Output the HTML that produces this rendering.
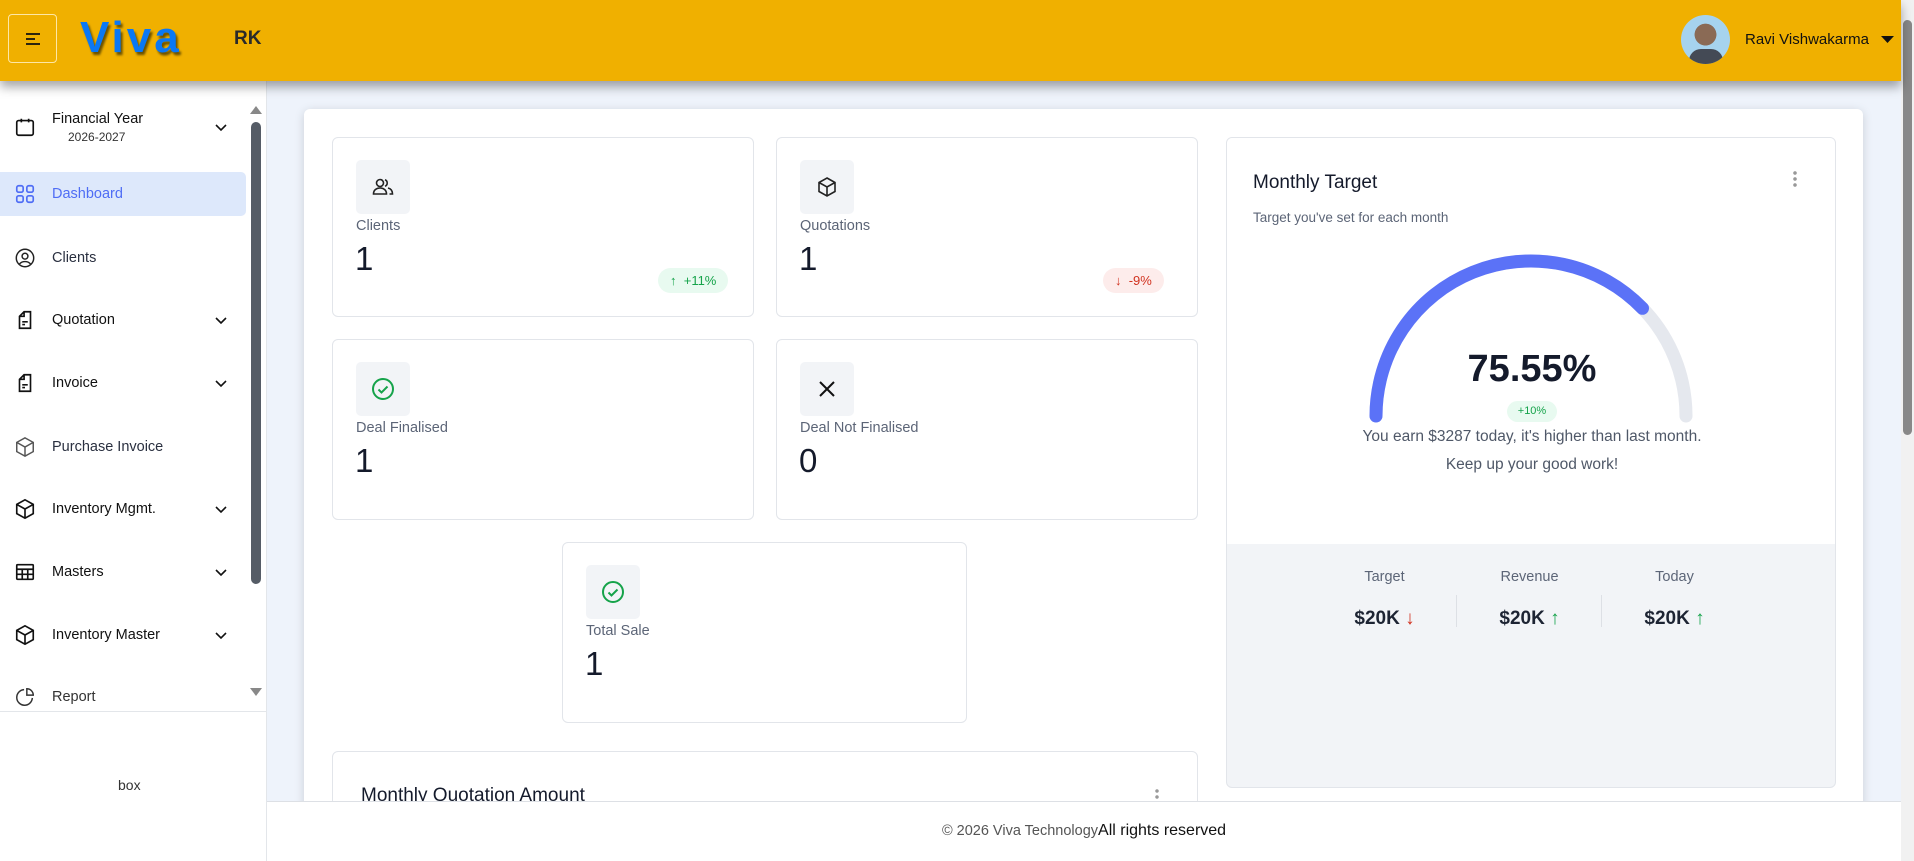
<!DOCTYPE html>
<html><head><meta charset="utf-8"><style>
*{box-sizing:border-box;margin:0;padding:0}
html,body{width:1914px;height:861px;overflow:hidden}
body{background:#eef3fb;font-family:"Liberation Sans",sans-serif;color:#1d2433;position:relative}
.a{position:absolute}
.hdr{left:0;top:0;width:1901px;height:81px;background:#f0b000;box-shadow:0 6px 10px rgba(0,0,0,.35);z-index:5}
.side{left:0;top:81px;width:267px;height:780px;background:#fff;border-right:1px solid #e3e6ea;z-index:3}
.it{position:absolute;left:0;width:246px;height:44px;display:flex;align-items:center;font-size:14.5px;color:#111}
.it svg{position:absolute;left:14px;width:22px;height:22px}
.it span{position:absolute;left:52px}
.it .chev{position:absolute;left:214px;width:14px;height:14px}
.card{position:absolute;background:#fff;border:1px solid #e2e5ea;border-radius:6px}
.ib{position:absolute;left:23px;top:22px;width:54px;height:54px;background:#f2f4f7;border-radius:5px}
.ib svg{position:absolute;left:15px;top:15px;width:24px;height:24px}
.lb{position:absolute;left:23px;top:80px;font-size:14.5px;color:#5c6577}
.num{position:absolute;left:22px;top:102px;font-size:33px;color:#141a2b}
.bdg{position:absolute;height:25px;border-radius:13px;font-size:13px;line-height:25px;padding:0 12px}
</style></head><body>
<div class="a hdr">
 <div class="a" style="left:8px;top:14px;width:49px;height:49px;border:1px solid #fde7a6;border-radius:4px">
  <svg class="a" style="left:14px;top:15px" width="20" height="18" viewBox="0 0 20 18" stroke="#111" stroke-width="1.8"><path d="M3 4h14M3 9h9M3 14h14"/></svg></div>
 <div class="a" style="left:80px;top:16px;font-size:44px;font-weight:bold;color:#0a78f5;letter-spacing:3px;text-shadow:2px 3px 2px #6b5200;line-height:44px">Viva</div>
 <div class="a" style="left:234px;top:28px;font-size:19px;font-weight:bold;color:#2a2a2a">RK</div>
 <div class="a" style="left:1681px;top:15px;width:49px;height:49px;border-radius:50%;background:radial-gradient(circle at 50% 40%,#8a6a55 0 28%,#a6d3ee 29%);overflow:hidden"><div class="a" style="left:8px;top:34px;width:34px;height:20px;background:#444a55;border-radius:12px 12px 0 0"></div></div>
 <div class="a" style="left:1745px;top:31px;font-size:15px;color:#111">Ravi Vishwakarma</div>
 <svg class="a" style="left:1881px;top:36px" width="13" height="8"><path d="M0 0h13L6.5 7z" fill="#111"/></svg>
</div>
<div class="a" style="left:1901px;top:0;width:13px;height:861px;background:#f1f1f1"><div class="a" style="left:2px;top:20px;width:9px;height:415px;background:#888;border-radius:5px"></div></div>
<div class="a side">
 <div class="it" style="top:21px;height:50px"><svg viewBox="0 0 24 24" fill="none" stroke="#111" stroke-width="1.8"><rect x="3" y="5" width="18" height="16" rx="2"/><path d="M8 3v4M16 3v4"/></svg>
  <span style="top:9px;font-size:14.5px">Financial Year</span><span style="top:28px;left:68px;font-size:12px;color:#333">2026-2027</span>
  <svg class="chev" viewBox="0 0 14 14" fill="none" stroke="#111" stroke-width="1.6"><path d="M2 5l5 5 5-5"/></svg></div>
 <div class="it" style="top:91px;background:#dde8fb;border-radius:0 5px 5px 0;color:#4f6df5"><svg viewBox="0 0 24 24" fill="none" stroke="#4f6df5" stroke-width="1.8"><rect x="3" y="3" width="7" height="7" rx="2"/><rect x="14" y="3" width="7" height="7" rx="2"/><rect x="3" y="14" width="7" height="7" rx="2"/><rect x="14" y="14" width="7" height="7" rx="2"/></svg><span>Dashboard</span></div>
 <div class="it" style="top:155px;color:#2a3040"><svg viewBox="0 0 24 24" fill="none" stroke="#222" stroke-width="1.6"><circle cx="12" cy="12" r="9.5"/><circle cx="12" cy="10" r="3.2"/><path d="M6 18.5c3-3.5 9-3.5 12 0"/></svg><span>Clients</span></div>
 <div class="it" style="top:217px"><svg viewBox="0 0 24 24" fill="none" stroke="#111" stroke-width="1.8"><path d="M11 3h7v18H6V8z M11 3v5H6M9 14h6M9 17h3"/></svg><span>Quotation</span><svg class="chev" viewBox="0 0 14 14" fill="none" stroke="#111" stroke-width="1.6"><path d="M2 5l5 5 5-5"/></svg></div>
 <div class="it" style="top:280px"><svg viewBox="0 0 24 24" fill="none" stroke="#111" stroke-width="1.8"><path d="M11 3h7v18H6V8z M11 3v5H6M9 14h6M9 17h3"/></svg><span>Invoice</span><svg class="chev" viewBox="0 0 14 14" fill="none" stroke="#111" stroke-width="1.6"><path d="M2 5l5 5 5-5"/></svg></div>
 <div class="it" style="top:344px;color:#2a3040"><svg viewBox="0 0 24 24" fill="none" stroke="#555" stroke-width="1.6"><path d="M12 2l9 5v10l-9 5-9-5V7z M3 7l9 5 9-5M12 12v10"/></svg><span>Purchase Invoice</span></div>
 <div class="it" style="top:406px"><svg viewBox="0 0 24 24" fill="none" stroke="#111" stroke-width="1.8"><path d="M12 2l9 5v10l-9 5-9-5V7z M3 7l9 5 9-5M12 12v10"/></svg><span>Inventory Mgmt.</span><svg class="chev" viewBox="0 0 14 14" fill="none" stroke="#111" stroke-width="1.6"><path d="M2 5l5 5 5-5"/></svg></div>
 <div class="it" style="top:469px"><svg viewBox="0 0 24 24" fill="none" stroke="#111" stroke-width="1.8"><rect x="3" y="4" width="18" height="16" rx="1"/><path d="M3 9h18M3 14.5h18M9 9v11M15 9v11"/></svg><span>Masters</span><svg class="chev" viewBox="0 0 14 14" fill="none" stroke="#111" stroke-width="1.6"><path d="M2 5l5 5 5-5"/></svg></div>
 <div class="it" style="top:532px"><svg viewBox="0 0 24 24" fill="none" stroke="#111" stroke-width="1.8"><path d="M12 2l9 5v10l-9 5-9-5V7z M3 7l9 5 9-5M12 12v10"/></svg><span>Inventory Master</span><svg class="chev" viewBox="0 0 14 14" fill="none" stroke="#111" stroke-width="1.6"><path d="M2 5l5 5 5-5"/></svg></div>
 <div class="a" style="left:0;top:594px;width:246px;height:36px;overflow:hidden"><div class="it" style="top:0"><svg viewBox="0 0 24 24" fill="none" stroke="#333" stroke-width="1.6"><path d="M11 4a8.5 8.5 0 1 0 9 9"/><path d="M14 3v7h7a7 7 0 0 0-7-7z"/></svg><span style="color:#333">Report</span></div></div>
 <div class="a" style="left:0;top:630px;width:266px;border-top:1px solid #e3e6ea"></div>
 <div class="a" style="left:118px;top:696px;font-size:14px;color:#333">box</div>
 <svg class="a" style="left:250px;top:25px" width="12" height="8"><path d="M0 8h12L6 0z" fill="#888"/></svg>
 <div class="a" style="left:251px;top:41px;width:10px;height:462px;background:#555c66;border-radius:5px"></div>
 <svg class="a" style="left:250px;top:607px" width="12" height="8"><path d="M0 0h12L6 8z" fill="#888"/></svg>
</div>
<div class="a" style="left:304px;top:109px;width:1559px;height:720px;background:#fff;border-radius:6px;box-shadow:0 2px 10px rgba(0,0,0,.15)"></div>
<div class="card" style="left:332px;top:137px;width:422px;height:180px"><div class="ib"><svg viewBox="0 0 24 24" fill="none" stroke="#222" stroke-width="1.6"><circle cx="9" cy="8" r="3.5"/><path d="M2.5 19c0-4 3-6 6.5-6s6.5 2 6.5 6z"/><path d="M14 4.8a3.5 3.5 0 0 1 0 6.5M17 13c2.5.6 4.5 2.5 4.5 6h-3"/></svg></div><div class="lb">Clients</div><div class="num">1</div><div class="bdg" style="left:325px;top:130px;background:#e8faf0;color:#15a34a">↑&nbsp; +11%</div></div>
<div class="card" style="left:776px;top:137px;width:422px;height:180px"><div class="ib"><svg viewBox="0 0 24 24" fill="none" stroke="#222" stroke-width="1.6"><path d="M12 3l8 4.5v9L12 21l-8-4.5v-9z M4 7.5l8 4.5 8-4.5M12 12v9"/></svg></div><div class="lb">Quotations</div><div class="num">1</div><div class="bdg" style="left:326px;top:130px;background:#fdeceb;color:#d1321f">↓&nbsp; -9%</div></div>
<div class="card" style="left:332px;top:339px;width:422px;height:181px"><div class="ib"><svg viewBox="0 0 24 24" fill="none" stroke="#16a34a" stroke-width="2"><circle cx="12" cy="12" r="10"/><path d="M7.5 12.5l3 3 6-6"/></svg></div><div class="lb">Deal Finalised</div><div class="num">1</div></div>
<div class="card" style="left:776px;top:339px;width:422px;height:181px"><div class="ib"><svg viewBox="0 0 24 24" fill="none" stroke="#111" stroke-width="2"><path d="M5 5l14 14M19 5L5 19"/></svg></div><div class="lb">Deal Not Finalised</div><div class="num">0</div></div>
<div class="card" style="left:562px;top:542px;width:405px;height:181px"><div class="ib"><svg viewBox="0 0 24 24" fill="none" stroke="#16a34a" stroke-width="2"><circle cx="12" cy="12" r="10"/><path d="M7.5 12.5l3 3 6-6"/></svg></div><div class="lb">Total Sale</div><div class="num">1</div></div>
<div class="card" style="left:332px;top:751px;width:866px;height:100px"><div class="a" style="left:28px;top:33px;font-size:19px;color:#141a2b">Monthly Quotation Amount</div><div class="a" style="left:822px;top:36px;width:4px;height:16px;background:radial-gradient(circle,#999 1.5px,transparent 2px) 0 0/4px 6px"></div></div>
<div class="card" style="left:1226px;top:137px;width:610px;height:651px;background:#f2f4f7;overflow:hidden">
 <div class="a" style="left:0;top:0;width:610px;height:406px;background:#fff"></div>
 <div class="a" style="left:26px;top:34px;font-size:19px;color:#141a2b">Monthly Target</div>
 <div class="a" style="left:26px;top:72px;font-size:13.5px;color:#5c6577">Target you've set for each month</div>
 <div class="a" style="left:566px;top:32px;width:4px;height:18px;background:radial-gradient(circle,#999 1.6px,transparent 2px) 0 0/4px 6px"></div>
 <svg class="a" style="left:0;top:0" width="610" height="406"><path d="M149 278A155 155 0 0 1 459 278" fill="none" stroke="#e5e8ee" stroke-width="13" stroke-linecap="round"/><path d="M149 278A155 155 0 0 1 415.5 170.3" fill="none" stroke="#5b72f7" stroke-width="13" stroke-linecap="round"/></svg>
 <div class="a" style="left:0;width:610px;top:210px;text-align:center;font-size:38px;font-weight:bold;color:#141a2b">75.55%</div>
 <div class="a" style="left:280px;top:263px;width:50px;height:21px;border-radius:11px;background:#e8faf0;color:#15a34a;font-size:11px;line-height:21px;text-align:center">+10%</div>
 <div class="a" style="left:0;width:610px;top:285px;text-align:center;font-size:15.5px;line-height:28px;color:#4f5868">You earn $3287 today, it's higher than last month.<br>Keep up your good work!</div>
 <div class="a" style="left:85px;top:431px;width:145px;text-align:center;font-size:14.5px;color:#5c6577">Target</div>
 <div class="a" style="left:230px;top:431px;width:145px;text-align:center;font-size:14.5px;color:#5c6577">Revenue</div>
 <div class="a" style="left:375px;top:431px;width:145px;text-align:center;font-size:14.5px;color:#5c6577">Today</div>
 <div class="a" style="left:229px;top:457px;width:1px;height:32px;background:#dde0e5"></div>
 <div class="a" style="left:374px;top:457px;width:1px;height:32px;background:#dde0e5"></div>
 <div class="a" style="left:85px;top:470px;width:145px;text-align:center;font-size:19px;font-weight:bold">$20K <span style="color:#d1321f;font-weight:normal">↓</span></div>
 <div class="a" style="left:230px;top:470px;width:145px;text-align:center;font-size:19px;font-weight:bold">$20K <span style="color:#15a34a;font-weight:normal">↑</span></div>
 <div class="a" style="left:375px;top:470px;width:145px;text-align:center;font-size:19px;font-weight:bold">$20K <span style="color:#15a34a;font-weight:normal">↑</span></div>
</div>
<div class="a" style="left:267px;top:801px;width:1634px;height:60px;background:#fff;border-top:1px solid #dde0e5;text-align:center;line-height:58px;font-size:16px;color:#111"><span style="color:#555;font-size:14.5px">© 2026 Viva Technology</span>All rights reserved</div>
</body></html>
